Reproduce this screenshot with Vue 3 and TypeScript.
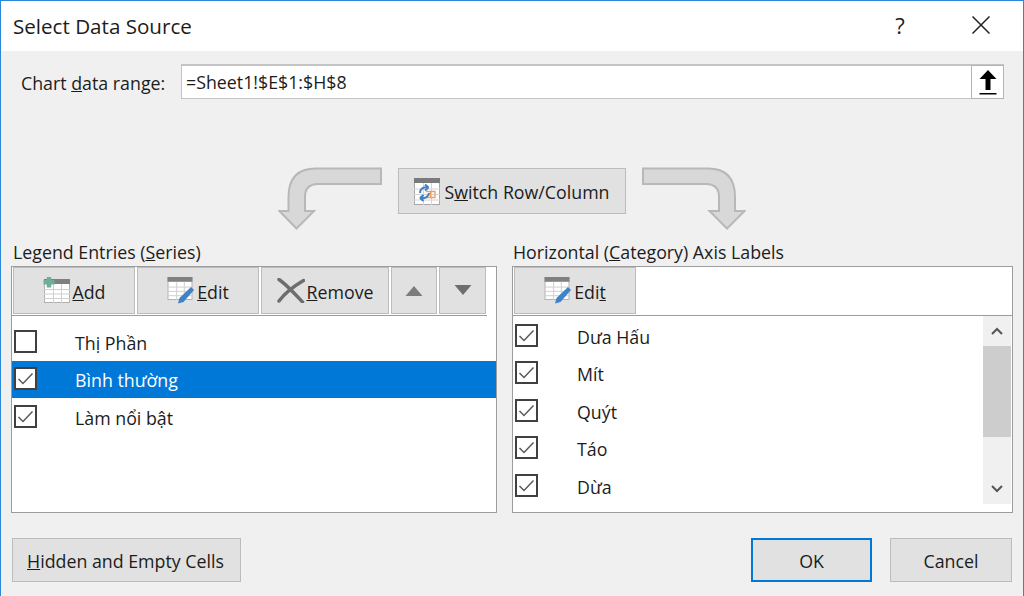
<script setup lang="ts">
const seriesRows = [
  { name: 'Thị Phần', checked: false, selected: false },
  { name: 'Bình thường', checked: true, selected: true },
  { name: 'Làm nổi bật', checked: true, selected: false },
]
const categoryRows = ['Dưa Hấu', 'Mít', 'Quýt', 'Táo', 'Dừa']
</script>

<template>
  <div class="dialog">
    <svg class="defs" width="0" height="0" aria-hidden="true">
      <defs>
        <symbol id="grid" viewBox="0 0 26 24">
          <rect x="0.5" y="0.5" width="25" height="23" fill="#fff" stroke="#b0b0b0" />
          <rect x="0" y="0" width="26" height="5" fill="#808080" />
          <path d="M9.5 5v19M17.500 5v19M0 10.500h26M0 15h26M0 19.500h26" stroke="#cfcfcf" fill="none" />
        </symbol>
        <symbol id="check" viewBox="0 0 19 19">
          <path d="M2.500 10l4.500 4.500L16.500 4.500" fill="none" stroke="#5a5a5a" stroke-width="1.500" />
        </symbol>
      </defs>
    </svg>

    <header class="titlebar">
      <span class="title">Select Data Source</span>
      <span class="help">?</span>
      <svg class="close" width="18" height="18" viewBox="0 0 18 18">
        <path d="M0.500 0.500l17 17M17.500 0.500l-17 17" stroke="#222" stroke-width="1.500" fill="none" />
      </svg>
    </header>

    <main class="body">
      <div class="range-row">
        <label class="range-label">Chart <u>d</u>ata range:</label>
        <div class="range-input">
          <span class="range-value">=Sheet1!$E$1:$H$8</span>
          <button class="collapse">
            <svg width="20" height="28" viewBox="0 0 20 28">
              <path d="M10 2L1.500 11h6v11h5V11h6z" fill="#000" />
              <rect x="1.500" y="25" width="17" height="1.500" fill="#000" />
            </svg>
          </button>
        </div>
      </div>

      <div class="switch-row">
        <svg class="flow-arrow" width="104" height="63" viewBox="0 0 104 63">
          <path d="M103 1.500V17H40Q27 17 27 30V44H36L18.500 61.500L1.500 44H10.500V30Q10.500 1.500 38 1.500Z" fill="#d8d8d8" stroke="#b8b8b8" stroke-width="2" />
        </svg>
        <button class="btn switch-btn">
          <svg width="26" height="27" viewBox="0 0 26 27">
            <rect x="0.500" y="0.500" width="25" height="26" fill="#fff" stroke="#a8a8a8" />
            <rect x="0" y="0" width="26" height="5" fill="#7a7a7a" />
            <path d="M9.500 5v22M17.500 5v22M0 11h26M0 16.500h26M0 22h26" stroke="#d4d4d4" fill="none" />
            <path d="M12 13.500h9v6h-9M16.500 13.500v6" stroke="#ed9c62" fill="none" stroke-width="1.300" />
            <path d="M6 15C6 11 9.500 8.500 14 9.500M14.500 9.500l-3.500-3M14.500 9.500l-3.500 3" stroke="#3e7fc4" stroke-width="2" fill="none" />
            <path d="M15 15c-.5 4-4.500 6-8.500 5M6 20l3.500-3M6 20l3.500 3" stroke="#3e7fc4" stroke-width="2" fill="none" />
          </svg>
          <span class="label">S<u>w</u>itch Row/Column</span>
        </button>
        <svg class="flow-arrow" width="104" height="63" viewBox="0 0 104 63">
          <path d="M1 1.500V17H64Q77 17 77 30V44H67.500L85 61.500L102.500 44H93V30Q93 1.500 66 1.500Z" fill="#d8d8d8" stroke="#b8b8b8" stroke-width="2" />
        </svg>
      </div>

      <div class="panels">
        <section class="panel-col left-col">
          <div class="panel-label">Legend Entries (<u>S</u>eries)</div>
          <div class="panel">
            <div class="toolbar fit">
              <button class="btn tool tool-add">
                <svg width="28" height="27" viewBox="0 0 28 27">
                  <use href="#grid" x="2" y="2" width="26" height="24" />
                  <path d="M7 0v10.500M1.500 5.250h11" stroke="#6fae9b" stroke-width="4.500" fill="none" />
                </svg>
                <span class="label"><u>A</u>dd</span>
              </button>
              <button class="btn tool tool-edit">
                <svg width="28" height="27" viewBox="0 0 28 27">
                  <use href="#grid" x="0" y="0" width="26" height="23" />
                  <path d="M11 26.500l1.500-5.500L24 10l3 3L16.500 25z" fill="#3f82c8" />
                </svg>
                <span class="label"><u>E</u>dit</span>
              </button>
              <button class="btn tool tool-remove">
                <svg width="28" height="25" viewBox="0 0 28 25">
                  <path d="M2 1.500C10 7 18 16 25.500 24M26.500 2.500C18 7.500 8 15 2 23" stroke="#6e6e6e" stroke-width="3.500" fill="none" stroke-linecap="round" />
                </svg>
                <span class="label"><u>R</u>emove</span>
              </button>
              <button class="btn tool tool-move">
                <svg width="18" height="10" viewBox="0 0 18 10"><path d="M9 0l8.500 10H.5z" fill="#7c7c7c" /></svg>
              </button>
              <button class="btn tool tool-move wide">
                <svg class="down" width="18" height="10" viewBox="0 0 18 10"><path d="M9 10L.5 0h17z" fill="#6e6e6e" /></svg>
              </button>
            </div>
            <ul class="list series-list">
              <li v-for="row in seriesRows" :key="row.name" class="row" :class="{ selected: row.selected }">
                <span class="box">
                  <svg v-if="row.checked" width="19" height="19"><use href="#check" /></svg>
                </span>
                <span class="row-text">{{ row.name }}</span>
              </li>
            </ul>
          </div>
        </section>

        <section class="panel-col right-col">
          <div class="panel-label">Horizontal (<u>C</u>ategory) Axis Labels</div>
          <div class="panel">
            <div class="toolbar">
              <button class="btn tool tool-edit">
                <svg width="28" height="27" viewBox="0 0 28 27">
                  <use href="#grid" x="0" y="0" width="26" height="23" />
                  <path d="M11 26.500l1.500-5.500L24 10l3 3L16.500 25z" fill="#3f82c8" />
                </svg>
                <span class="label">Edi<u>t</u></span>
              </button>
            </div>
            <div class="category-body">
              <ul class="list category-list">
                <li v-for="name in categoryRows" :key="name" class="row">
                  <span class="box">
                    <svg width="19" height="19"><use href="#check" /></svg>
                  </span>
                  <span class="row-text">{{ name }}</span>
                </li>
              </ul>
              <div class="scrollbar">
                <div class="scroll-arrow">
                  <svg width="12" height="8" viewBox="0 0 12 8"><path d="M1 7l5-5 5 5" stroke="#555" stroke-width="2" fill="none" /></svg>
                </div>
                <div class="thumb"></div>
                <div class="scroll-space"></div>
                <div class="scroll-arrow">
                  <svg width="12" height="8" viewBox="0 0 12 8"><path d="M1 1l5 5 5-5" stroke="#555" stroke-width="2" fill="none" /></svg>
                </div>
              </div>
            </div>
          </div>
        </section>
      </div>

      <footer class="footer">
        <button class="btn hidden-btn"><span class="label"><u>H</u>idden and Empty Cells</span></button>
        <div class="actions">
          <button class="btn ok-btn"><span class="label">OK</span></button>
          <button class="btn cancel-btn"><span class="label">Cancel</span></button>
        </div>
      </footer>
    </main>
  </div>
</template>

<style>
html, body { margin: 0; padding: 0; background: #f0f0f0; }
</style>

<style scoped>
.dialog {
  width: 1024px;
  height: 596px;
  box-sizing: border-box;
  border: 1px solid #2b88d8;
  border-bottom: 0;
  background: #f0f0f0;
  font-family: "Open Sans", "Noto Sans", sans-serif;
  font-size: 17.8px;
  color: #1c1c1c;
  overflow: hidden;
}
.defs { position: absolute; }
.titlebar {
  height: 50px;
  background: #fff;
  display: flex;
  align-items: center;
  padding-left: 12px;
}
.title { font-size: 20.6px; flex: 1; margin-top: -1px; }
.help { font-size: 22px; width: 20px; text-align: center; margin-right: 62px; margin-top: -3px; }
.close { margin-right: 33px; margin-top: -2px; }
.body { padding: 13px 0 0; }
.range-row { display: flex; align-items: stretch; height: 35px; padding-left: 20px; }
.range-label { width: 160px; line-height: 38px; }
.range-input {
  width: 823px;
  box-sizing: border-box;
  background: #fff;
  border: 1px solid #c4c4c4;
  border-top-width: 2px;
  display: flex;
  justify-content: space-between;
  padding-left: 4px;
}
.range-value { line-height: 33px; }
.collapse {
  width: 33px;
  height: 34px;
  margin-top: -1px;
  margin-right: -1px;
  padding: 0;
  border: 1px solid #b4b4b4;
  background: #fff;
  display: flex;
  align-items: center;
  justify-content: center;
}
.switch-row {
  display: flex;
  align-items: flex-start;
  gap: 16px;
  margin-top: 68px;
  padding-left: 277px;
  height: 63px;
}
.btn {
  box-sizing: border-box;
  background: #e1e1e1;
  border: 1px solid #bcbcbc;
  font: inherit;
  color: inherit;
  padding: 0;
  display: flex;
  align-items: center;
  justify-content: center;
}
.label { margin-top: 2px; }
.hidden-btn .label { margin-left: -2px; }
.switch-btn { width: 228px; height: 46px; gap: 4px; margin-top: 1px; }
.panels {
  display: flex;
  gap: 15px;
  padding-left: 10px;
  margin-top: 9px;
}
.panel-col { display: flex; flex-direction: column; }
.left-col { width: 486px; }
.right-col { width: 501px; }
.panel-label { height: 27px; line-height: 26px; padding-left: 2px; }
.right-col .panel-label { padding-left: 1px; }
.panel {
  box-sizing: border-box;
  height: 247px;
  background: #fff;
  border: 1px solid #9c9c9c;
  display: flex;
  flex-direction: column;
}
.toolbar {
  display: flex;
  gap: 2px;
  height: 47px;
  padding: 0 1px 1px;
  border-bottom: 1px solid #9c9c9c;
  flex: none;
}
.toolbar.fit { align-self: flex-start; }
.tool { height: 47px; gap: 2px; }
.tool-add { width: 122px; }
.tool-edit { width: 122px; }
.tool-remove { width: 128px; }
.tool-move { width: 46px; }
.tool-move.wide { width: 47px; }
.down { margin-top: -2px; }
.list { list-style: none; margin: 0; padding: 0; }
.series-list { padding-top: 7px; }
.row { height: 37.5px; display: flex; align-items: center; padding-left: 2px; }
.row.selected { background: #0078d7; color: #fff; }
.box {
  box-sizing: border-box;
  width: 23px;
  height: 23px;
  border: 2px solid #404040;
  background: #fff;
  display: flex;
  align-items: center;
  justify-content: center;
  flex: none;
  margin-top: -1px;
}
.box svg { display: block; }
.row-text { margin-left: 39px; margin-top: 2px; }
.series-list .row-text { margin-left: 38px; }
.category-body { flex: 1; display: flex; min-height: 0; }
.category-list { flex: 1; padding-top: 1px; }
.scrollbar {
  width: 28px;
  height: 188px;
  margin-right: 1px;
  background: #f0f0f0;
  display: flex;
  flex-direction: column;
}
.scroll-arrow { height: 30px; display: flex; align-items: center; justify-content: center; flex: none; }
.thumb { height: 91px; background: #cdcdcd; flex: none; }
.scroll-space { flex: 1; }
.footer {
  display: flex;
  justify-content: space-between;
  margin-top: 25px;
  padding: 0 11px;
}
.actions { display: flex; gap: 18px; }
.footer .btn { height: 44px; }
.hidden-btn { width: 229px; }
.ok-btn { width: 121px; border: 2px solid #0078d7; }
.cancel-btn { width: 122px; }
</style>
